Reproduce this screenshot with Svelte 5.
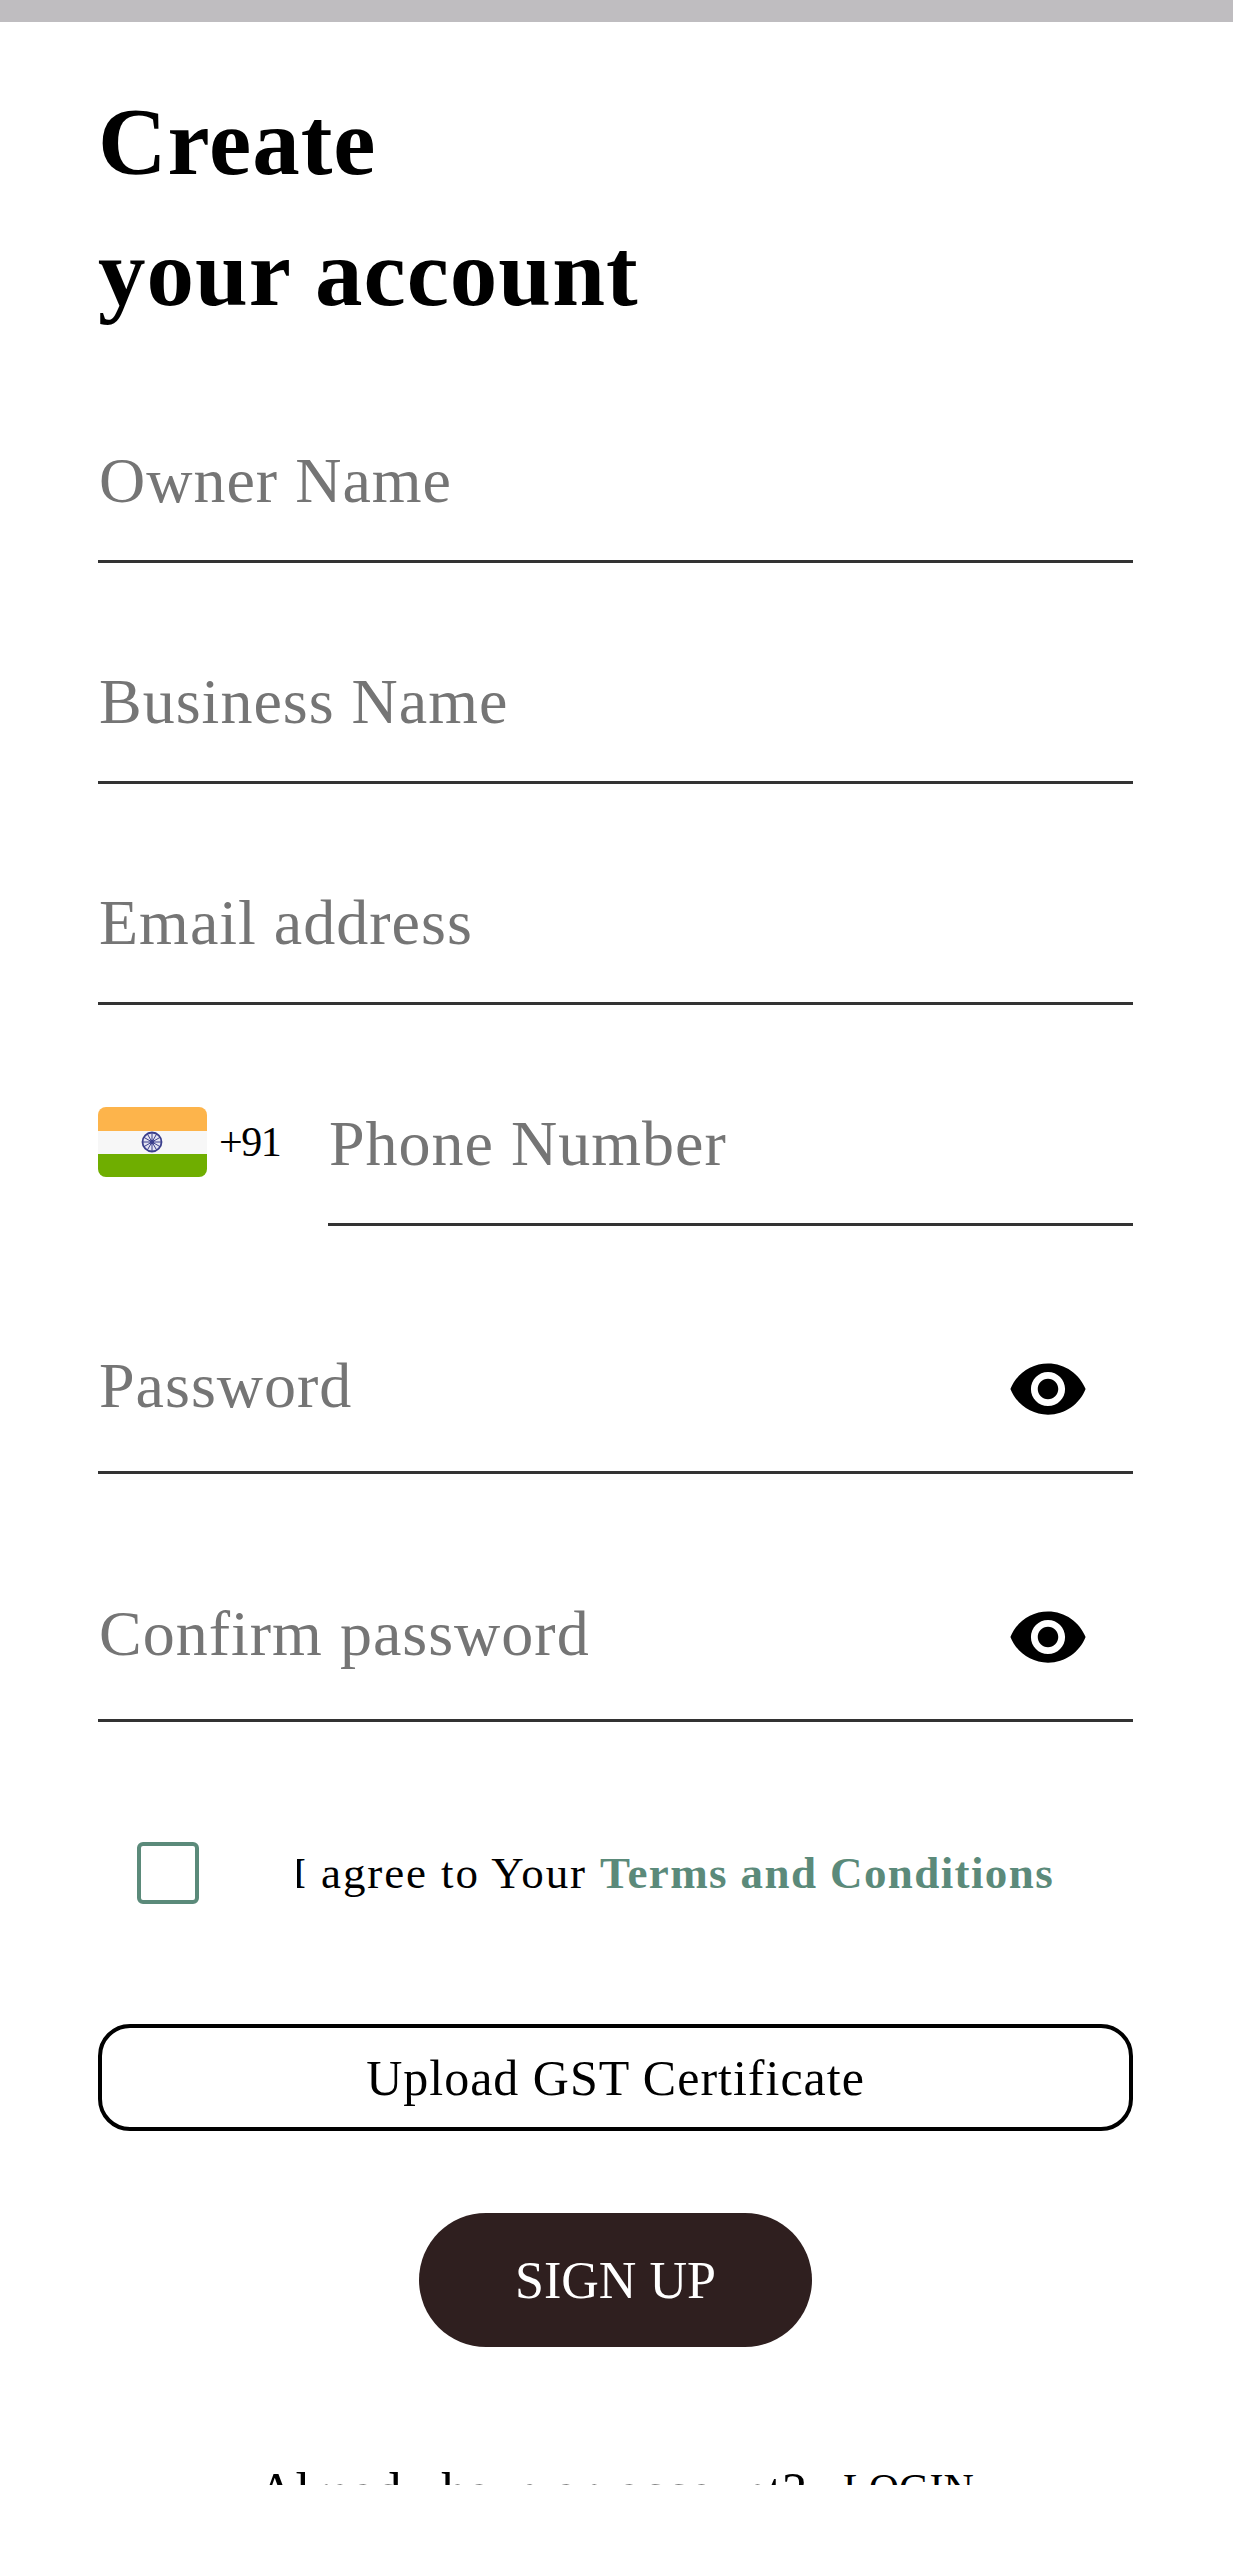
<script lang="ts">
  let agreed = $state(false);
  let showPassword = $state(false);
  let showConfirm = $state(false);

  // chakra spokes on the flag
  const spokes = Array.from({ length: 12 }, (_, i) => (i * Math.PI) / 6);
</script>

{#snippet eye()}
  <svg viewBox="0 0 24 24" width="82" height="82" aria-hidden="true">
    <path
      fill="#000"
      d="M12 4.5C7 4.5 2.73 7.61 1 12c1.73 4.39 6 7.5 11 7.5s9.27-3.11 11-7.5c-1.73-4.39-6-7.5-11-7.5zM12 17c-2.76 0-5-2.24-5-5s2.24-5 5-5 5 2.24 5 5-2.24 5-5 5zm0-8c-1.66 0-3 1.34-3 3s1.34 3 3 3 3-1.34 3-3-1.34-3-3-3z"
    />
  </svg>
{/snippet}

<div class="page">
  <div class="topbar"></div>

  <main class="content">
    <h1>Create<br />your account</h1>

    <input class="field first" type="text" placeholder="Owner Name" />
    <input class="field" type="text" placeholder="Business Name" />
    <input class="field" type="email" placeholder="Email address" />

    <div class="phone">
      <div class="country">
        <svg class="flag" viewBox="0 0 109 70" width="109" height="70" aria-hidden="true">
          <defs>
            <clipPath id="flag-clip"><rect width="109" height="70" rx="8" /></clipPath>
          </defs>
          <g clip-path="url(#flag-clip)">
            <rect width="109" height="24" fill="#fdb44b" />
            <rect y="24" width="109" height="23" fill="#f7f7f7" />
            <rect y="47" width="109" height="23" fill="#6fae00" />
          </g>
          <circle cx="54" cy="35" r="9.5" fill="#e4e4f2" stroke="#3b3f8c" stroke-width="1.8" />
          {#each spokes as a}
            <line
              x1="54"
              y1="35"
              x2={54 + 9 * Math.cos(a)}
              y2={35 + 9 * Math.sin(a)}
              stroke="#3b3f8c"
              stroke-width="1"
            />
          {/each}
          <circle cx="54" cy="35" r="2.2" fill="#3b3f8c" />
        </svg>
        <span class="code">+91</span>
      </div>
      <input class="field phone-input" type="tel" placeholder="Phone Number" />
    </div>

    <div class="password">
      <input class="field" type={showPassword ? "text" : "password"} placeholder="Password" />
      <button class="eye" type="button" aria-label="Show password" onclick={() => (showPassword = !showPassword)}>
        {@render eye()}
      </button>
    </div>

    <div class="password">
      <input class="field" type={showConfirm ? "text" : "password"} placeholder="Confirm password" />
      <button class="eye" type="button" aria-label="Show password" onclick={() => (showConfirm = !showConfirm)}>
        {@render eye()}
      </button>
    </div>

    <div class="terms">
      <button
        class="checkbox"
        class:agreed
        type="button"
        role="checkbox"
        aria-checked={agreed}
        aria-label="Agree"
        onclick={() => (agreed = !agreed)}
      ></button>
      <span class="terms-text">I agree to Your <strong>Terms and Conditions</strong></span>
    </div>

    <button class="upload" type="button">Upload GST Certificate</button>
    <button class="signup" type="button">SIGN UP</button>

    <div class="login-clip">
      <p class="login">Already have an account?<span class="login-link">LOGIN</span></p>
    </div>
  </main>
</div>

<style>
  :global(body) {
    margin: 0;
    background: #fff;
  }
  .page {
    height: 2560px;
    overflow: hidden;
    background: #fff;
    font-family: "Liberation Serif", serif;
    color: #000;
  }
  .topbar {
    height: 22px;
    background: #bfbdc0;
  }
  .content {
    display: flex;
    flex-direction: column;
    padding: 0 100px 0 98px;
  }
  h1 {
    margin: 55px 0 0;
    font-size: 95px;
    line-height: 131px;
    font-weight: 700;
    letter-spacing: 1px;
  }
  .field {
    display: block;
    width: 100%;
    box-sizing: border-box;
    height: 137px;
    margin-top: 84px;
    padding: 0 0 24px 1px;
    border: 0;
    border-bottom: 3px solid #333;
    border-radius: 0;
    outline: none;
    background: transparent;
    font-family: inherit;
    font-size: 64px;
    letter-spacing: 1px;
    color: #000;
  }
  .field::placeholder {
    color: #757575;
    opacity: 1;
  }
  .field.first {
    margin-top: 87px;
  }
  .phone {
    display: flex;
    align-items: flex-start;
    margin-top: 84px;
  }
  .country {
    display: flex;
    align-items: center;
    flex: none;
    width: 230px;
    margin-top: 18px;
    gap: 12px;
  }
  .flag {
    flex: none;
  }
  .code {
    font-size: 42px;
    letter-spacing: -1.5px;
  }
  .phone-input {
    flex: 1;
    min-width: 0;
    margin-top: 0;
  }
  .password {
    position: relative;
    margin-top: 100px;
  }
  .password .field {
    height: 148px;
    margin-top: 0;
    padding-bottom: 26px;
  }
  .eye {
    position: absolute;
    right: 44px;
    top: 22px;
    padding: 0;
    border: 0;
    background: none;
    line-height: 0;
    cursor: pointer;
  }
  .terms {
    display: flex;
    align-items: center;
    margin-top: 120px;
    padding-left: 39px;
  }
  .checkbox {
    flex: none;
    width: 62px;
    height: 62px;
    padding: 0;
    box-sizing: border-box;
    border: 4px solid #5b8a7a;
    border-radius: 6px;
    background: #fff;
    cursor: pointer;
  }
  .checkbox.agreed {
    background: #5b8a7a;
  }
  .terms-text {
    margin-left: 98px;
    overflow: hidden;
    white-space: nowrap;
    text-indent: -6px;
    font-size: 45px;
    letter-spacing: 1.9px;
  }
  .terms-text strong {
    font-weight: 700;
    letter-spacing: 1.4px;
    color: #5b8a7a;
  }
  .upload {
    height: 107px;
    margin-top: 120px;
    border: 4px solid #000;
    border-radius: 32px;
    background: #fff;
    font-family: inherit;
    font-size: 50px;
    letter-spacing: 1px;
    color: #000;
    cursor: pointer;
  }
  .signup {
    align-self: center;
    width: 393px;
    height: 134px;
    margin-top: 82px;
    border: 0;
    border-radius: 67px;
    background: #2f1f1f;
    font-family: inherit;
    font-size: 52px;
    color: #fff;
    cursor: pointer;
  }
  .login-clip {
    height: 138px;
    overflow: hidden;
  }
  .login {
    margin: 112px 0 0;
    text-align: center;
    font-size: 53px;
    line-height: 60px;
    white-space: nowrap;
  }
  .login-link {
    margin-left: 37px;
    font-size: 42px;
    vertical-align: 6px;
  }
</style>
